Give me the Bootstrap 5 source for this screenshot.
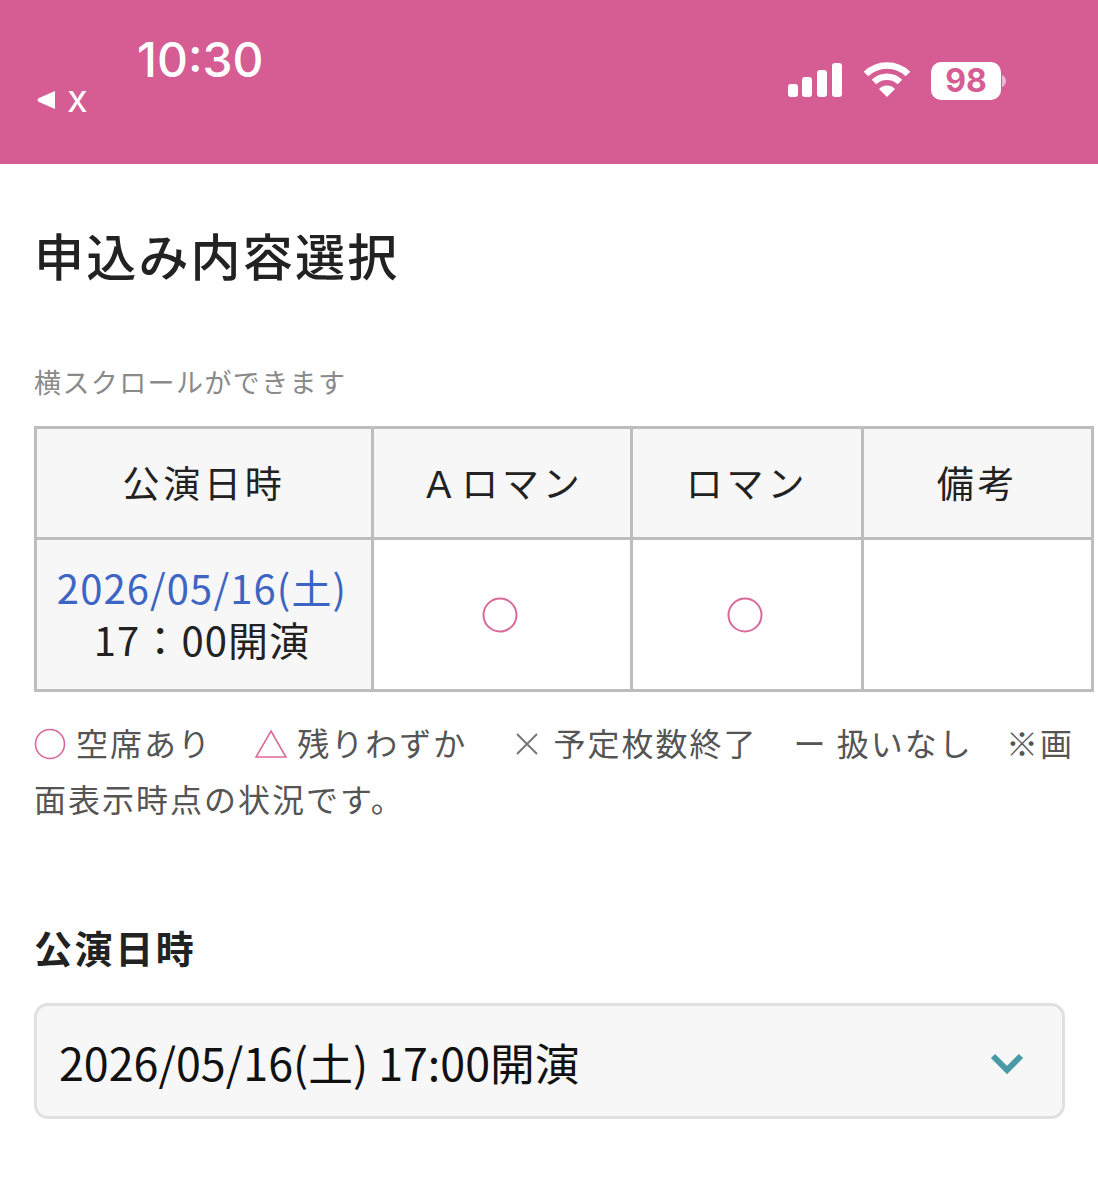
<!DOCTYPE html>
<html lang="ja">
<head>
  <meta charset="UTF-8">
  <meta name="viewport" content="width=device-width, initial-scale=1.0">
  <title>申込み内容選択</title>
  <link href="https://cdn.jsdelivr.net/npm/bootstrap@5.3.0/dist/css/bootstrap.min.css" rel="stylesheet">
  <style>
    body {
      background-color: #fff;
      color: #222;
      font-family: "Noto Sans CJK JP", "Noto Sans", sans-serif;
    }
    .status-bar {
      height: 164px;
      background-color: #d65c94;
      color: #fff;
      padding: 32px 91px 0 36px;
    }
    .status-time {
      font-family: Inter, sans-serif;
      font-size: 48px;
      font-weight: 500;
      line-height: 56px;
      margin-left: 101px;
    }
    .status-back {
      font-family: Inter, sans-serif;
      font-size: 38px;
      line-height: 26px;
      gap: 11px;
    }
    .status-back span {
      margin-top: -3px;
    }
    .status-icons {
      gap: 20px;
      padding-top: 30px;
    }
    .battery-box {
      width: 70px;
      height: 38px;
      border-radius: 10px;
      background-color: #fff;
      color: #d65c94;
      font-family: Inter, sans-serif;
      font-size: 32px;
      font-weight: 700;
      line-height: 38px;
      text-align: center;
    }
    .page-body {
      padding: 0 33px 0 34px;
    }
    .page-title {
      font-size: 50px;
      font-weight: 500;
      line-height: 72px;
      letter-spacing: 2.2px;
      margin: 54px 0 0;
    }
    .scroll-note {
      color: #8a8a8a;
      font-size: 27px;
      line-height: 40px;
      letter-spacing: 1.4px;
      margin: 72px 0 24px;
    }
    .stock-table {
      table-layout: fixed;
      width: 1057px;
      border-collapse: collapse;
    }
    .stock-table th, .stock-table td {
      border: 3px solid #bdbdbd;
      text-align: center;
      vertical-align: middle;
      padding: 0;
    }
    .stock-table th {
      height: 111px;
      background-color: #f7f7f7;
      font-size: 37px;
      font-weight: 400;
      letter-spacing: 3.8px;
    }
    .stock-table td {
      height: 152px;
      padding-right: 4px;
    }
    .stock-table .date-cell {
      background-color: #f7f7f7;
      font-size: 40px;
      line-height: 52px;
      letter-spacing: 1.1px;
      padding-bottom: 4px;
    }
    .date-cell a {
      color: #3d66c4;
      text-decoration: none;
    }
    .legend-text {
      color: #555;
      font-size: 32px;
      line-height: 56px;
      letter-spacing: 2px;
      margin: 22px -14px 0 0;
    }
    .legend-item svg {
      vertical-align: -4px;
      margin-right: 10px;
    }
    .legend-open { margin-right: 34px; }
    .legend-few { margin-right: 35px; }
    .legend-end { margin-right: 27px; }
    .legend-none { margin-right: 24px; }
    .field-label {
      font-size: 38px;
      font-weight: 700;
      line-height: 56px;
      letter-spacing: 2.6px;
      margin: 93px 0 28px;
    }
    .date-select {
      height: 116px;
      background-color: #f7f7f7;
      border: 3px solid #e0e0e0;
      border-radius: 14px;
      font-size: 44.8px;
      color: #111;
      padding: 1px 38px 0 22px;
    }
    .date-select svg {
      margin-top: 4px;
    }
  </style>
</head>
<body>

  <div class="status-bar">
    <div class="d-flex justify-content-between">
      <div>
        <div class="status-time">10:30</div>
        <div class="status-back d-flex align-items-center">
          <svg width="20" height="20" viewBox="0 0 20 20"><path d="M19 1V19L3 12Q0 10 3 8Z" fill="#fff"/></svg>
          <span>x</span>
        </div>
      </div>
      <div class="status-icons d-flex align-items-start">
        <svg width="56" height="36" viewBox="0 0 56 36" fill="#fff">
          <rect x="1" y="22" width="10" height="13" rx="3"/>
          <rect x="15" y="15" width="10" height="20" rx="3"/>
          <rect x="30" y="8" width="10" height="27" rx="3"/>
          <rect x="45" y="1" width="10" height="34" rx="3"/>
        </svg>
        <svg width="48" height="36" viewBox="0 0 48 36">
          <path d="M3 12A30 30 0 0 1 45 12" fill="none" stroke="#fff" stroke-width="6.5"/>
          <path d="M11 20A19 19 0 0 1 37 20" fill="none" stroke="#fff" stroke-width="6.5"/>
          <path d="M16 27A11 11 0 0 1 32 27L24 35Z" fill="#fff"/>
        </svg>
        <div class="d-flex align-items-center">
          <div class="battery-box">98</div>
          <svg width="6" height="14" viewBox="0 0 6 14"><path d="M1 1Q5 3 5 7T1 13Z" fill="#f0b5d0"/></svg>
        </div>
      </div>
    </div>
  </div>

  <div class="page-body">
    <h1 class="page-title">申込み内容選択</h1>
    <p class="scroll-note">横スクロールができます</p>

    <table class="stock-table">
      <colgroup><col style="width:337px"><col style="width:259px"><col style="width:231px"><col style="width:230px"></colgroup>
      <tr><th>公演日時</th><th>Ａロマン</th><th>ロマン</th><th>備考</th></tr>
      <tr>
        <td class="date-cell"><a href="#" class="d-block">2026/05/16(土)</a><div>17：00開演</div></td>
        <td><svg width="36" height="36" viewBox="0 0 36 36"><circle cx="18" cy="18" r="16.5" fill="none" stroke="#d9689b" stroke-width="2"/></svg></td>
        <td><svg width="36" height="36" viewBox="0 0 36 36"><circle cx="18" cy="18" r="16.5" fill="none" stroke="#d9689b" stroke-width="2"/></svg></td>
        <td></td>
      </tr>
    </table>

    <p class="legend-text">
      <span class="legend-item legend-open"><svg width="32" height="32" viewBox="0 0 32 32"><circle cx="16" cy="16" r="14.5" fill="none" stroke="#d9689b" stroke-width="1.6"/></svg>空席あり</span>
      <span class="legend-item legend-few"><svg width="32" height="32" viewBox="0 0 32 32"><path d="M16 3L31 29H1Z" fill="none" stroke="#d9689b" stroke-width="1.6"/></svg>残りわずか</span>
      <span class="legend-item legend-end"><svg width="32" height="32" viewBox="0 0 32 32"><path d="M6 6L26 26M26 6L6 26" fill="none" stroke="#777" stroke-width="2"/></svg>予定枚数終了</span>
      <span class="legend-item legend-none">ー 扱いなし</span>
      <span class="text-nowrap">※画</span><br>面表示時点の状況です。
    </p>

    <div class="field-label">公演日時</div>
    <div class="date-select d-flex align-items-center justify-content-between">
      <span>2026/05/16(土) 17:00開演</span>
      <svg width="34" height="24" viewBox="0 0 34 24"><path d="M3 4L17 18L31 4" fill="none" stroke="#4a9aa6" stroke-width="6"/></svg>
    </div>
  </div>

</body>
</html>
